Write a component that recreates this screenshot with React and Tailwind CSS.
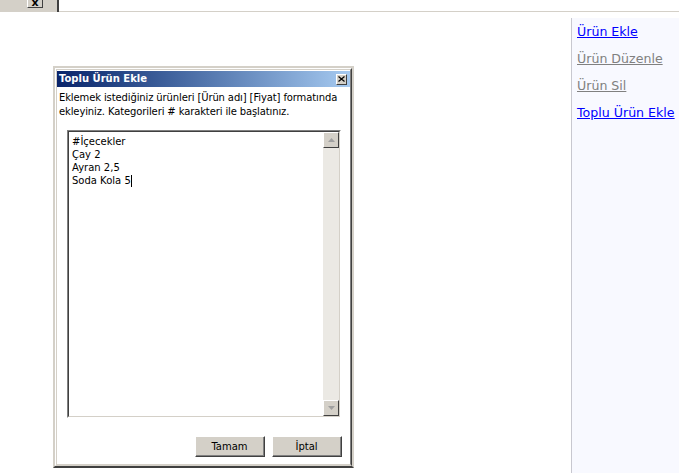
import React from 'react';

const tahoma = { fontFamily: '"DejaVu Sans", "Liberation Sans", sans-serif' };

function ScrollBtn({ down }) {
  return (
    <div className="w-[16px] h-[16px] bg-[#d4d0c8] border border-t-white border-l-white border-r-[#404040] border-b-[#404040] flex items-center justify-center">
      <svg width="7" height="4" viewBox="0 0 7 4">
        {down ? <path d="M0 0h7L3.5 4z" fill="#a0a0a0" /> : <path d="M0 4h7L3.5 0z" fill="#a0a0a0" />}
      </svg>
    </div>
  );
}

function WinButton({ children }) {
  return (
    <div className="h-[21px] w-[70px] bg-[#d4d0c8] border border-t-white border-l-white border-r-[#404040] border-b-[#404040]">
      <div className="h-full border-r border-b border-[#808080] flex items-center justify-center text-[10px] text-black">
        {children}
      </div>
    </div>
  );
}

function Dialog() {
  return (
    <div className="w-[301px] h-[402px] border-2 border-[#d4d0c8] border-b-[#404040]">
      <div className="h-full border border-t-white border-l-white border-r-[#404040] border-b-[#d4d0c8]">
        <div className="h-full border border-[#d4d0c8] border-r-[#808080] bg-white flex flex-col" style={tahoma}>
          <div className="mt-[1px] h-[16px] flex items-center justify-between pl-[2px] pr-[3px] bg-gradient-to-r from-[#0a246a] to-[#a6caf0]">
            <span className="text-[10px] font-bold text-white leading-none">Toplu Ürün Ekle</span>
            <div className="w-[11px] h-[11px] bg-[#d4d0c8] border border-t-white border-l-white border-r-[#404040] border-b-[#404040] flex items-center justify-center">
              <svg width="7" height="6" viewBox="0 0 7 6">
                <path d="M0.5 0.5L6.5 5.5M6.5 0.5L0.5 5.5" stroke="#000" strokeWidth="1.2" />
              </svg>
            </div>
          </div>
          <p className="px-[2px] pt-[4px] text-[10px] leading-[14px] tracking-[-0.12px] text-black">
            Eklemek istediğiniz ürünleri [Ürün adı] [Fiyat] formatında ekleyiniz. Kategorileri # karakteri ile başlatınız.
          </p>
          <div className="ml-[10px] mt-[11px] w-[274px] h-[288px] border border-t-[#808080] border-l-[#808080] border-r-white border-b-white">
            <div className="h-full border border-t-[#404040] border-l-[#404040] border-r-[#d4d0c8] border-b-[#d4d0c8] flex">
              <div className="flex-1 pl-[3px] pt-[3px] text-[10px] leading-[13px] text-black">
                <div>#İçecekler</div>
                <div>Çay 2</div>
                <div>Ayran 2,5</div>
                <div className="flex items-center">Soda Kola 5<span className="inline-block w-px h-[12px] bg-black" /></div>
              </div>
              <div className="w-[16px] bg-[#ebe9e4] flex flex-col justify-between">
                <ScrollBtn />
                <ScrollBtn down />
              </div>
            </div>
          </div>
          <div className="mt-[18px] pr-[8px] flex justify-end gap-[7px]">
            <WinButton>Tamam</WinButton>
            <WinButton>İptal</WinButton>
          </div>
        </div>
      </div>
    </div>
  );
}

export default function App() {
  const links = [
    { label: 'Ürün Ekle', active: true },
    { label: 'Ürün Düzenle', active: false },
    { label: 'Ürün Sil', active: false },
    { label: 'Toplu Ürün Ekle', active: true },
  ];
  return (
    <div className="w-[679px] h-[473px] bg-white flex flex-col overflow-hidden" style={tahoma}>
      <div className="flex h-[12px]">
        <div className="w-[59px] bg-[#d4d0c8] border-r-2 border-[#404040] pl-[27px]">
          <div className="w-[16px] h-[8px] bg-[#d4d0c8] border border-t-0 border-l-white border-r-[#404040] border-b-[#404040] overflow-hidden flex justify-center items-end">
            <span className="text-[11px] font-bold leading-[8px] text-black">x</span>
          </div>
        </div>
        <div className="flex-1 border-b border-[#d4d0c8]" />
      </div>
      <div className="flex flex-1">
        <div className="flex-1 pl-[53px] pt-[54px]">
          <Dialog />
        </div>
        <div className="w-[108px] mt-[6px] border-l border-[#c8c8d0] bg-[#f8f9ff] pl-[5px] pt-[6px] flex flex-col gap-[11px]">
          {links.map(l => (
            <a key={l.label} href="#" className={`text-[12.6px] leading-[16px] underline whitespace-nowrap ${l.active ? 'text-[#0000ff]' : 'text-[#808080]'}`}>
              {l.label}
            </a>
          ))}
        </div>
      </div>
    </div>
  );
}
